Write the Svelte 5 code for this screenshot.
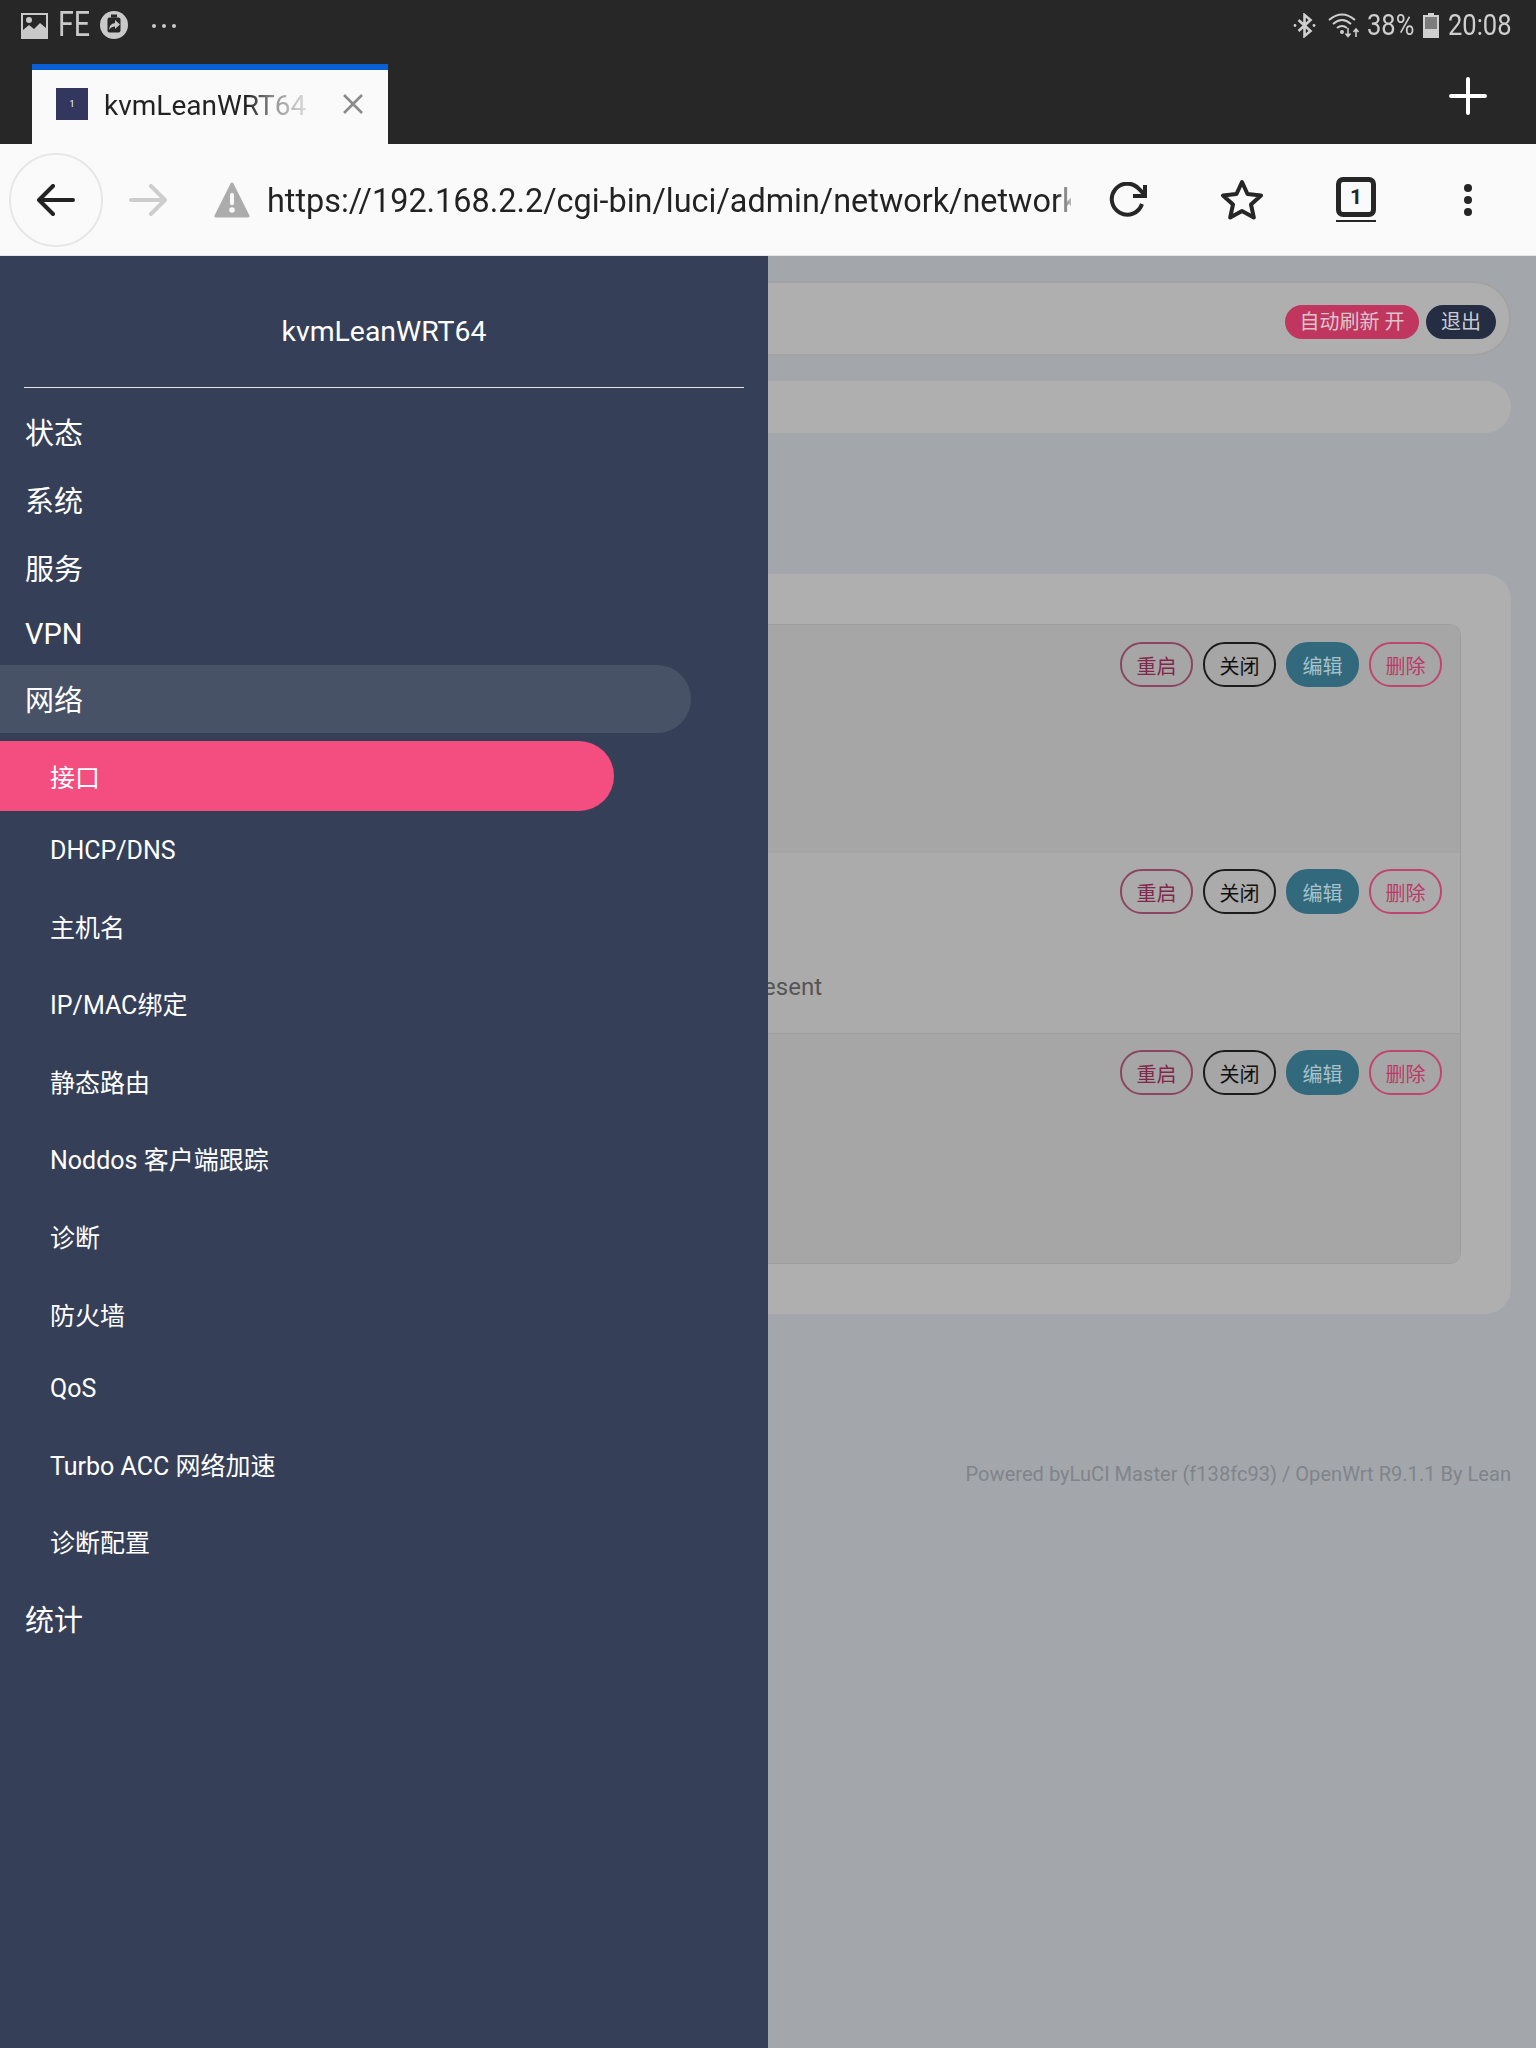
<script>
	const topBefore = ['状态', '系统', '服务', 'VPN']
	const subMenu = ['DHCP/DNS', '主机名', 'IP/MAC绑定', '静态路由', 'Noddos 客户端跟踪', '诊断', '防火墙', 'QoS', 'Turbo ACC 网络加速', '诊断配置']
	const rows = [
		{ cls: 'odd', height: 228, note: '' },
		{ cls: 'even', height: 181, note: 'Error: Device not present' },
		{ cls: 'odd last', height: 229, note: '' }
	]
	const actions = [
		{ label: '重启', cls: 'restart' },
		{ label: '关闭', cls: 'stop' },
		{ label: '编辑', cls: 'edit' },
		{ label: '删除', cls: 'del' }
	]
</script>

<div class="screen">
	<div class="chrome">
		<div class="status">
			<div class="status-left">
				<svg width="27" height="26" viewBox="0 0 27 26">
					<path fill="#c9c9c9" fill-rule="evenodd" d="M0 0h27v26H0zM2 2v15l6-5 5 4 6-6 6 5V2z" />
					<circle cx="8" cy="7" r="3" fill="#c9c9c9" />
				</svg>
				<span class="fe">FE</span>
				<svg width="28" height="28" viewBox="0 0 28 28">
					<circle cx="14" cy="14" r="14" fill="#c9c9c9" />
					<rect x="7.500" y="6.500" width="13" height="15" rx="2" fill="#272727" />
					<rect x="11" y="3.500" width="6" height="3" fill="#272727" />
					<path fill="#c9c9c9" d="M15 9l5 4.500-5 4.500v-2.500q-4 0-6 3.500 0-6 6-7z" />
				</svg>
				<span class="more"><i></i><i></i><i></i></span>
			</div>
			<div class="status-right">
				<svg width="23" height="25" viewBox="0 0 23 25" fill="none" stroke="#cfcfcf" stroke-width="2.600">
					<path d="M5.500 7l12 11-6 5V2l6 5-12 11" />
					<circle cx="2" cy="12.500" r="1.400" fill="#cfcfcf" stroke="none" />
					<circle cx="21" cy="12.500" r="1.400" fill="#cfcfcf" stroke="none" />
				</svg>
				<svg class="wifi" width="32" height="25" viewBox="0 0 32 25" fill="none" stroke="#cfcfcf" stroke-width="2">
					<path d="M1 7q13-11 26 0M5 11q9-8 18 0M9 15q5-4 10 0" />
					<circle cx="14" cy="19" r="2" fill="#cfcfcf" stroke="none" />
					<path stroke-width="1.600" d="M20 15v8M17.500 20.500l2.500 3 2.500-3M28 24v-8M25.500 19l2.500-3 2.500 3" />
				</svg>
				<span class="num pct">38%</span>
				<svg class="battery" width="16" height="25" viewBox="0 0 16 25">
					<path fill="#d0d0d0" d="M5 0h6v2h5v23H0V2h5z" />
					<path fill="#7c7c7c" d="M2 4h12v12H2z" />
				</svg>
				<span class="num clock">20:08</span>
			</div>
		</div>
		<div class="tabs">
			<div class="tab">
				<span class="favicon">1</span>
				<span class="tab-title">kvmLeanWRT64</span>
				<svg class="tab-close" width="20" height="20" viewBox="0 0 20 20" stroke="#8a8a8a" stroke-width="2.600">
					<path d="M1 1l18 18M19 1L1 19" />
				</svg>
			</div>
			<svg class="plus" width="38" height="38" viewBox="0 0 38 38" stroke="#fff" stroke-width="4" stroke-linecap="round">
				<path d="M19 2v34M2 19h34" />
			</svg>
		</div>
		<div class="toolbar">
			<span class="back">
				<svg width="38" height="32" viewBox="0 0 38 32" fill="none" stroke="#222" stroke-width="4" stroke-linecap="round" stroke-linejoin="round">
					<path d="M36 16H3M16 2L2 16l14 14" />
				</svg>
			</span>
			<svg class="forward" width="38" height="32" viewBox="0 0 38 32" fill="none" stroke="#cdcdcd" stroke-width="4" stroke-linecap="round" stroke-linejoin="round">
				<path d="M2 16h33M22 2l14 14-14 14" />
			</svg>
			<svg class="warn" width="36" height="36" viewBox="0 0 36 36">
				<path fill="#acacac" stroke="#acacac" stroke-width="3" stroke-linejoin="round" d="M18 2L34 34H2z" />
				<rect x="16" y="11" width="4" height="12" rx="1.500" fill="#fafafa" />
				<circle cx="18" cy="28" r="2.800" fill="#fafafa" />
			</svg>
			<div class="url">https://192.168.2.2/cgi-bin/luci/admin/network/network</div>
			<svg class="reload" width="38" height="36" viewBox="0 0 38 36" fill="none" stroke="#262626" stroke-width="4">
				<path d="M33 22a15.500 15.500 0 1 1-3-15l5 5" />
				<path d="M36 3v11H24" />
			</svg>
			<svg class="star" width="42" height="42" viewBox="0 0 42 42" fill="none" stroke="#262626" stroke-width="4" stroke-linejoin="round">
				<path d="M21 3l5.500 12 13.500 1.500-10 9 2.800 13L21 32l-11.800 6.500 2.800-13-10-9L15.500 15z" />
			</svg>
			<div class="count"><span>1</span></div>
			<span class="kebab"><i></i><i></i><i></i></span>
		</div>
	</div>

	<div class="stage">
		<div class="page">
			<div class="topbar">
				<span class="pill refresh">自动刷新 开</span>
				<span class="pill logout">退出</span>
			</div>
			<div class="crumbs"></div>
			<div class="card">
				<div class="table">
					{#each rows as row}
						<div class="row {row.cls}" style="height: {row.height}px">
							<div class="actions">
								{#each actions as a}
									<span class="btn {a.cls}">{a.label}</span>
								{/each}
							</div>
							{#if row.note}
								<div class="note">{row.note}</div>
							{/if}
						</div>
					{/each}
				</div>
			</div>
			<div class="footer">Powered byLuCI Master (f138fc93) / OpenWrt R9.1.1 By Lean</div>
		</div>

		<nav class="drawer">
			<div class="brand">kvmLeanWRT64</div>
			<ul class="menu">
				{#each topBefore as item}
					<li class="top" class:vpn={item === 'VPN'}>{item}</li>
				{/each}
				<li class="top open">网络</li>
				<li class="sub active">接口</li>
				{#each subMenu as item}
					<li class="sub" class:qos={item === 'QoS'}>{item}</li>
				{/each}
				<li class="top stats">统计</li>
			</ul>
		</nav>
	</div>
</div>

<style>
	:global(body) {
		margin: 0;
		background: #a3a7ac;
	}
	.screen {
		height: 2048px;
		display: flex;
		flex-direction: column;
		overflow: hidden;
		font-family: Roboto, 'Noto Sans CJK SC', sans-serif;
	}
	.chrome {
		background: #272727;
	}
	.status {
		height: 64px;
		display: flex;
		justify-content: space-between;
		padding: 11px 24px 0 21px;
		box-sizing: border-box;
	}
	.status-left,
	.status-right {
		display: flex;
		align-items: flex-start;
	}
	.status-left {
		gap: 10px;
	}
	.status-left svg:first-child {
		margin-top: 2px;
	}
	.fe {
		width: 32px;
		color: #c9c9c9;
		font-size: 35px;
		line-height: 28px;
		white-space: nowrap;
		transform: scaleX(0.82);
		transform-origin: left;
	}
	.more {
		display: flex;
		gap: 6px;
		margin: 13px 0 0 14px;
	}
	.more i {
		width: 4px;
		height: 4px;
		border-radius: 50%;
		background: #c9c9c9;
	}
	.status-right svg {
		margin-top: 2px;
	}
	.wifi {
		margin-left: 12px;
	}
	.num {
		display: inline-block;
		color: #cfcfcf;
		font-size: 29px;
		line-height: 28px;
		white-space: nowrap;
		transform: scaleX(0.88);
		transform-origin: left;
	}
	.pct {
		width: 47px;
		margin-left: 7px;
	}
	.battery {
		margin-left: 9px;
	}
	.clock {
		width: 64px;
		margin-left: 9px;
	}
	.tabs {
		height: 80px;
		display: flex;
		justify-content: space-between;
		align-items: flex-start;
		padding: 0 49px 0 32px;
	}
	.tab {
		width: 356px;
		height: 80px;
		box-sizing: border-box;
		background: #fafafa;
		border-top: 6px solid #0a5fd4;
		display: flex;
		align-items: center;
		padding: 0 0 6px 24px;
	}
	.favicon {
		width: 32px;
		height: 32px;
		flex: none;
		background: #33365f;
		color: #fff;
		font-size: 9px;
		display: flex;
		align-items: center;
		justify-content: center;
	}
	.tab-title {
		width: 203px;
		margin: 2px 0 0 16px;
		font-size: 28px;
		white-space: nowrap;
		overflow: hidden;
		color: transparent;
		background: linear-gradient(90deg, #222 0, #222 70%, #999 85%, #ddd 100%);
		-webkit-background-clip: text;
		background-clip: text;
	}
	.tab-close {
		margin-left: 36px;
	}
	.plus {
		margin-top: 13px;
	}
	.toolbar {
		height: 112px;
		box-sizing: border-box;
		background: #fafafa;
		border-bottom: 1px solid #e6e6e6;
		display: flex;
		align-items: center;
	}
	.back {
		width: 94px;
		height: 94px;
		box-sizing: border-box;
		border: 2px solid #e7e7e7;
		border-radius: 50%;
		margin-left: 9px;
		display: flex;
		align-items: center;
		justify-content: center;
		flex: none;
	}
	.forward {
		margin-left: 26px;
		flex: none;
	}
	.warn {
		margin-left: 47px;
		flex: none;
	}
	.url {
		width: 804px;
		margin: 3px 0 0 17px;
		flex: none;
		font-size: 32.4px;
		white-space: nowrap;
		overflow: hidden;
		color: transparent;
		background: linear-gradient(90deg, #222 0, #222 98%, #bbb 100%);
		-webkit-background-clip: text;
		background-clip: text;
	}
	.reload {
		margin-left: 38px;
		flex: none;
	}
	.star {
		margin-left: 74px;
		flex: none;
	}
	.count {
		margin-left: 73px;
		width: 40px;
		flex: none;
		padding-bottom: 3px;
		border-bottom: 2px solid #262626;
	}
	.count span {
		display: block;
		height: 40px;
		box-sizing: border-box;
		border: 5px solid #262626;
		border-radius: 7px;
		text-align: center;
		font-size: 21px;
		font-weight: 700;
		line-height: 30px;
		color: #262626;
	}
	.kebab {
		margin-left: 88px;
		display: flex;
		flex-direction: column;
		gap: 4px;
	}
	.kebab i {
		width: 8px;
		height: 8px;
		border-radius: 50%;
		background: #262626;
	}
	.stage {
		flex: 1;
		position: relative;
	}
	.page {
		padding: 25px 25px 0 0;
	}
	.topbar {
		height: 75px;
		box-sizing: border-box;
		background: #afafaf;
		border: 2px solid #a2a2a2;
		border-left: 0;
		border-radius: 0 37px 37px 0;
		display: flex;
		justify-content: flex-end;
		align-items: center;
		gap: 7px;
		padding: 6px 13px 0 0;
	}
	.pill {
		height: 34px;
		border-radius: 17px;
		font-size: 20px;
		line-height: 34px;
		text-align: center;
		box-sizing: border-box;
	}
	.refresh {
		width: 134px;
		background: #c0365f;
		color: #dcc4cc;
	}
	.logout {
		width: 70px;
		background: #252d42;
		color: #c9ccd2;
	}
	.crumbs {
		height: 52px;
		margin-top: 25px;
		background: #afafaf;
		border-radius: 0 26px 26px 0;
	}
	.card {
		margin-top: 141px;
		padding: 50px 50px 50px 0;
		background: #afafaf;
		border-radius: 0 26px 26px 0;
	}
	.table {
		border: 1px solid #9d9d9d;
		border-left: 0;
		border-radius: 0 12px 12px 0;
		overflow: hidden;
	}
	.row {
		box-sizing: border-box;
		padding: 16px 18px 0 0;
	}
	.row.odd {
		background: #a6a6a6;
	}
	.row.even {
		background: #ababab;
		border-bottom: 1px solid #9d9d9d;
	}
	.actions {
		display: flex;
		justify-content: flex-end;
		gap: 10px;
	}
	.row.odd:first-child .actions {
		margin-top: 1px;
	}
	.btn {
		width: 73px;
		height: 45px;
		box-sizing: border-box;
		border-radius: 22px;
		border: 2px solid;
		font-size: 20px;
		line-height: 47px;
		text-align: center;
	}
	.restart {
		border-color: #8a4560;
		color: #80284a;
	}
	.stop {
		border-color: #1c1c1c;
		color: #111;
	}
	.edit {
		border-color: #33697d;
		background: #33697d;
		color: #a7c2c9;
	}
	.del {
		border-color: #bf4570;
		color: #bc3a68;
	}
	.note {
		margin: 59px 0 0 0;
		width: 822px;
		text-align: right;
		font-size: 24px;
		line-height: 28px;
		color: #555;
	}
	.footer {
		margin-top: 147px;
		text-align: right;
		font-size: 20.1px;
		line-height: 26px;
		color: #80848a;
	}
	.drawer {
		position: absolute;
		left: 0;
		top: 0;
		bottom: 0;
		width: 768px;
		background: #363f58;
		color: #fff;
	}
	.brand {
		margin: 0 24px;
		height: 132px;
		box-sizing: border-box;
		border-bottom: 1px solid #e3e5ea;
		font-size: 28.4px;
		text-align: center;
		padding-top: 57px;
		line-height: 38px;
	}
	.menu {
		list-style: none;
		margin: 10px 0 0;
		padding: 0;
	}
	.top {
		height: 68px;
		line-height: 73px;
		padding-left: 25px;
		font-size: 29px;
	}
	.top.vpn {
		height: 63px;
		line-height: 64px;
	}
	.top.open {
		width: 691px;
		box-sizing: border-box;
		background: #475267;
		border-radius: 0 34px 34px 0;
	}
	.top.stats {
		margin-top: 3px;
	}
	.sub {
		height: 77.6px;
		line-height: 80.6px;
		padding-left: 50px;
		font-size: 25px;
	}
	.sub.qos {
		margin-top: -5px;
	}
	.sub.active {
		height: 70px;
		line-height: 75px;
		width: 614px;
		box-sizing: border-box;
		margin-top: 8px;
		background: #f44d7f;
		border-radius: 0 35px 35px 0;
	}
</style>
